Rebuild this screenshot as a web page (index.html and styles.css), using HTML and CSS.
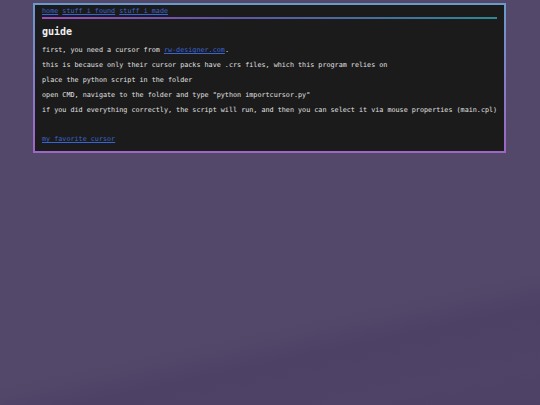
FILE: index.html
```html
<!DOCTYPE html>
<html>
<head>
<meta charset="utf-8">
<link rel="stylesheet" href="styles.css">
</head>
<body>
<main class="box">
  <nav class="nav"><a href="#">home</a> <a href="#">stuff i found</a> <a href="#">stuff i made</a></nav>
  <div class="rule"></div>
  <h2 class="title">guide</h2>
  <p class="line">first, you need a cursor from <a href="#">rw-designer.com</a>.</p>
  <p class="line">this is because only their cursor packs have .crs files, which this program relies on</p>
  <p class="line">place the python script in the folder</p>
  <p class="line">open CMD, navigate to the folder and type "python importcursor.py"</p>
  <p class="line">if you did everything correctly, the script will run, and then you can select it via mouse properties (main.cpl)</p>
  <p class="fav"><a href="#">my favorite cursor</a></p>
</main>
</body>
</html>
```
FILE: styles.css
```css
html, body {
  margin: 0;
  padding: 0;
  height: 100%;
}
body {
  background: linear-gradient(168deg, #54486a 0%, #54486a 74%, #4d4266 81%, #4f4468 92%, #4d4266 100%);
  font-family: "DejaVu Sans Mono", monospace;
  color: #e0e0e0;
}
.box {
  box-sizing: border-box;
  width: 473px;
  margin: 3px 0 0 33px;
  border: 2px solid;
  border-image: linear-gradient(to bottom, #6a9acb, #9c66c4) 1;
  background: #1b1b1b;
  padding: 2px 7px 8px 7px;
}
a {
  color: #3a64d2;
  text-decoration: underline;
}
.nav {
  font-size: 6.75px;
  line-height: 8px;
  height: 8px;
}
.rule {
  height: 2px;
  margin-top: 2px;
  background: linear-gradient(to right, #9c4cb8, #5a5aa4 45%, #2e8696);
}
.title {
  margin: 7px 0 0;
  font-size: 10px;
  line-height: 12px;
  font-weight: bold;
  color: #f0f0f0;
}
.line {
  margin: 7px 0 0;
  font-size: 6.75px;
  line-height: 8px;
  white-space: nowrap;
}
.title + .line {
  margin-top: 8px;
}
.fav {
  margin: 21px 0 0;
  font-size: 6.75px;
  line-height: 8px;
}
```
